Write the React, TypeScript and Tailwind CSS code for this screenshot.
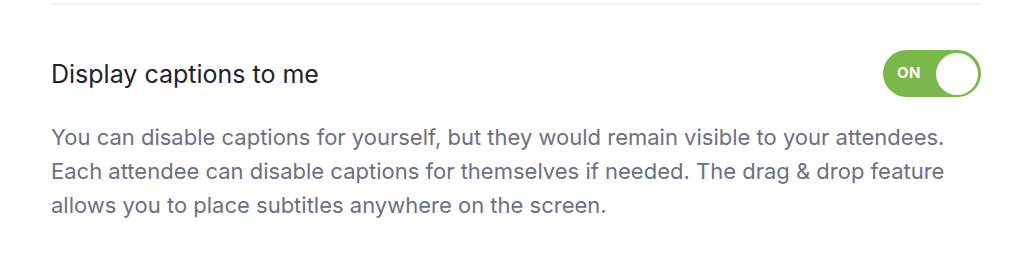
import React from 'react';

export default function App() {
  return (
    <div className="w-[1024px] h-[270px] bg-white font-['Inter',sans-serif]">
      <div className="ml-[51px] w-[930px]">
        <div className="h-[2px] mt-[3px] bg-[#f0f0f4]" />
        <div className="flex items-center justify-between mt-[45px]">
          <h3 className="text-[25px] leading-[30px] text-[#1e2230]">Display captions to me</h3>
          <button className="flex items-center w-[98px] h-[47px] rounded-full bg-[#7ab84b] pl-[14px] pr-[3px]">
            <span className="text-[15px] font-bold text-white tracking-wide">ON</span>
            <span className="ml-auto w-[42px] h-[42px] rounded-full bg-white" />
          </button>
        </div>
        <p className="mt-[23px] text-[22px] leading-[34px] text-[#6c7081] whitespace-nowrap">
          You can disable captions for yourself, but they would remain visible to your attendees.
          <br />
          Each attendee can disable captions for themselves if needed. The drag &amp; drop feature
          <br />
          allows you to place subtitles anywhere on the screen.
        </p>
      </div>
    </div>
  );
}
